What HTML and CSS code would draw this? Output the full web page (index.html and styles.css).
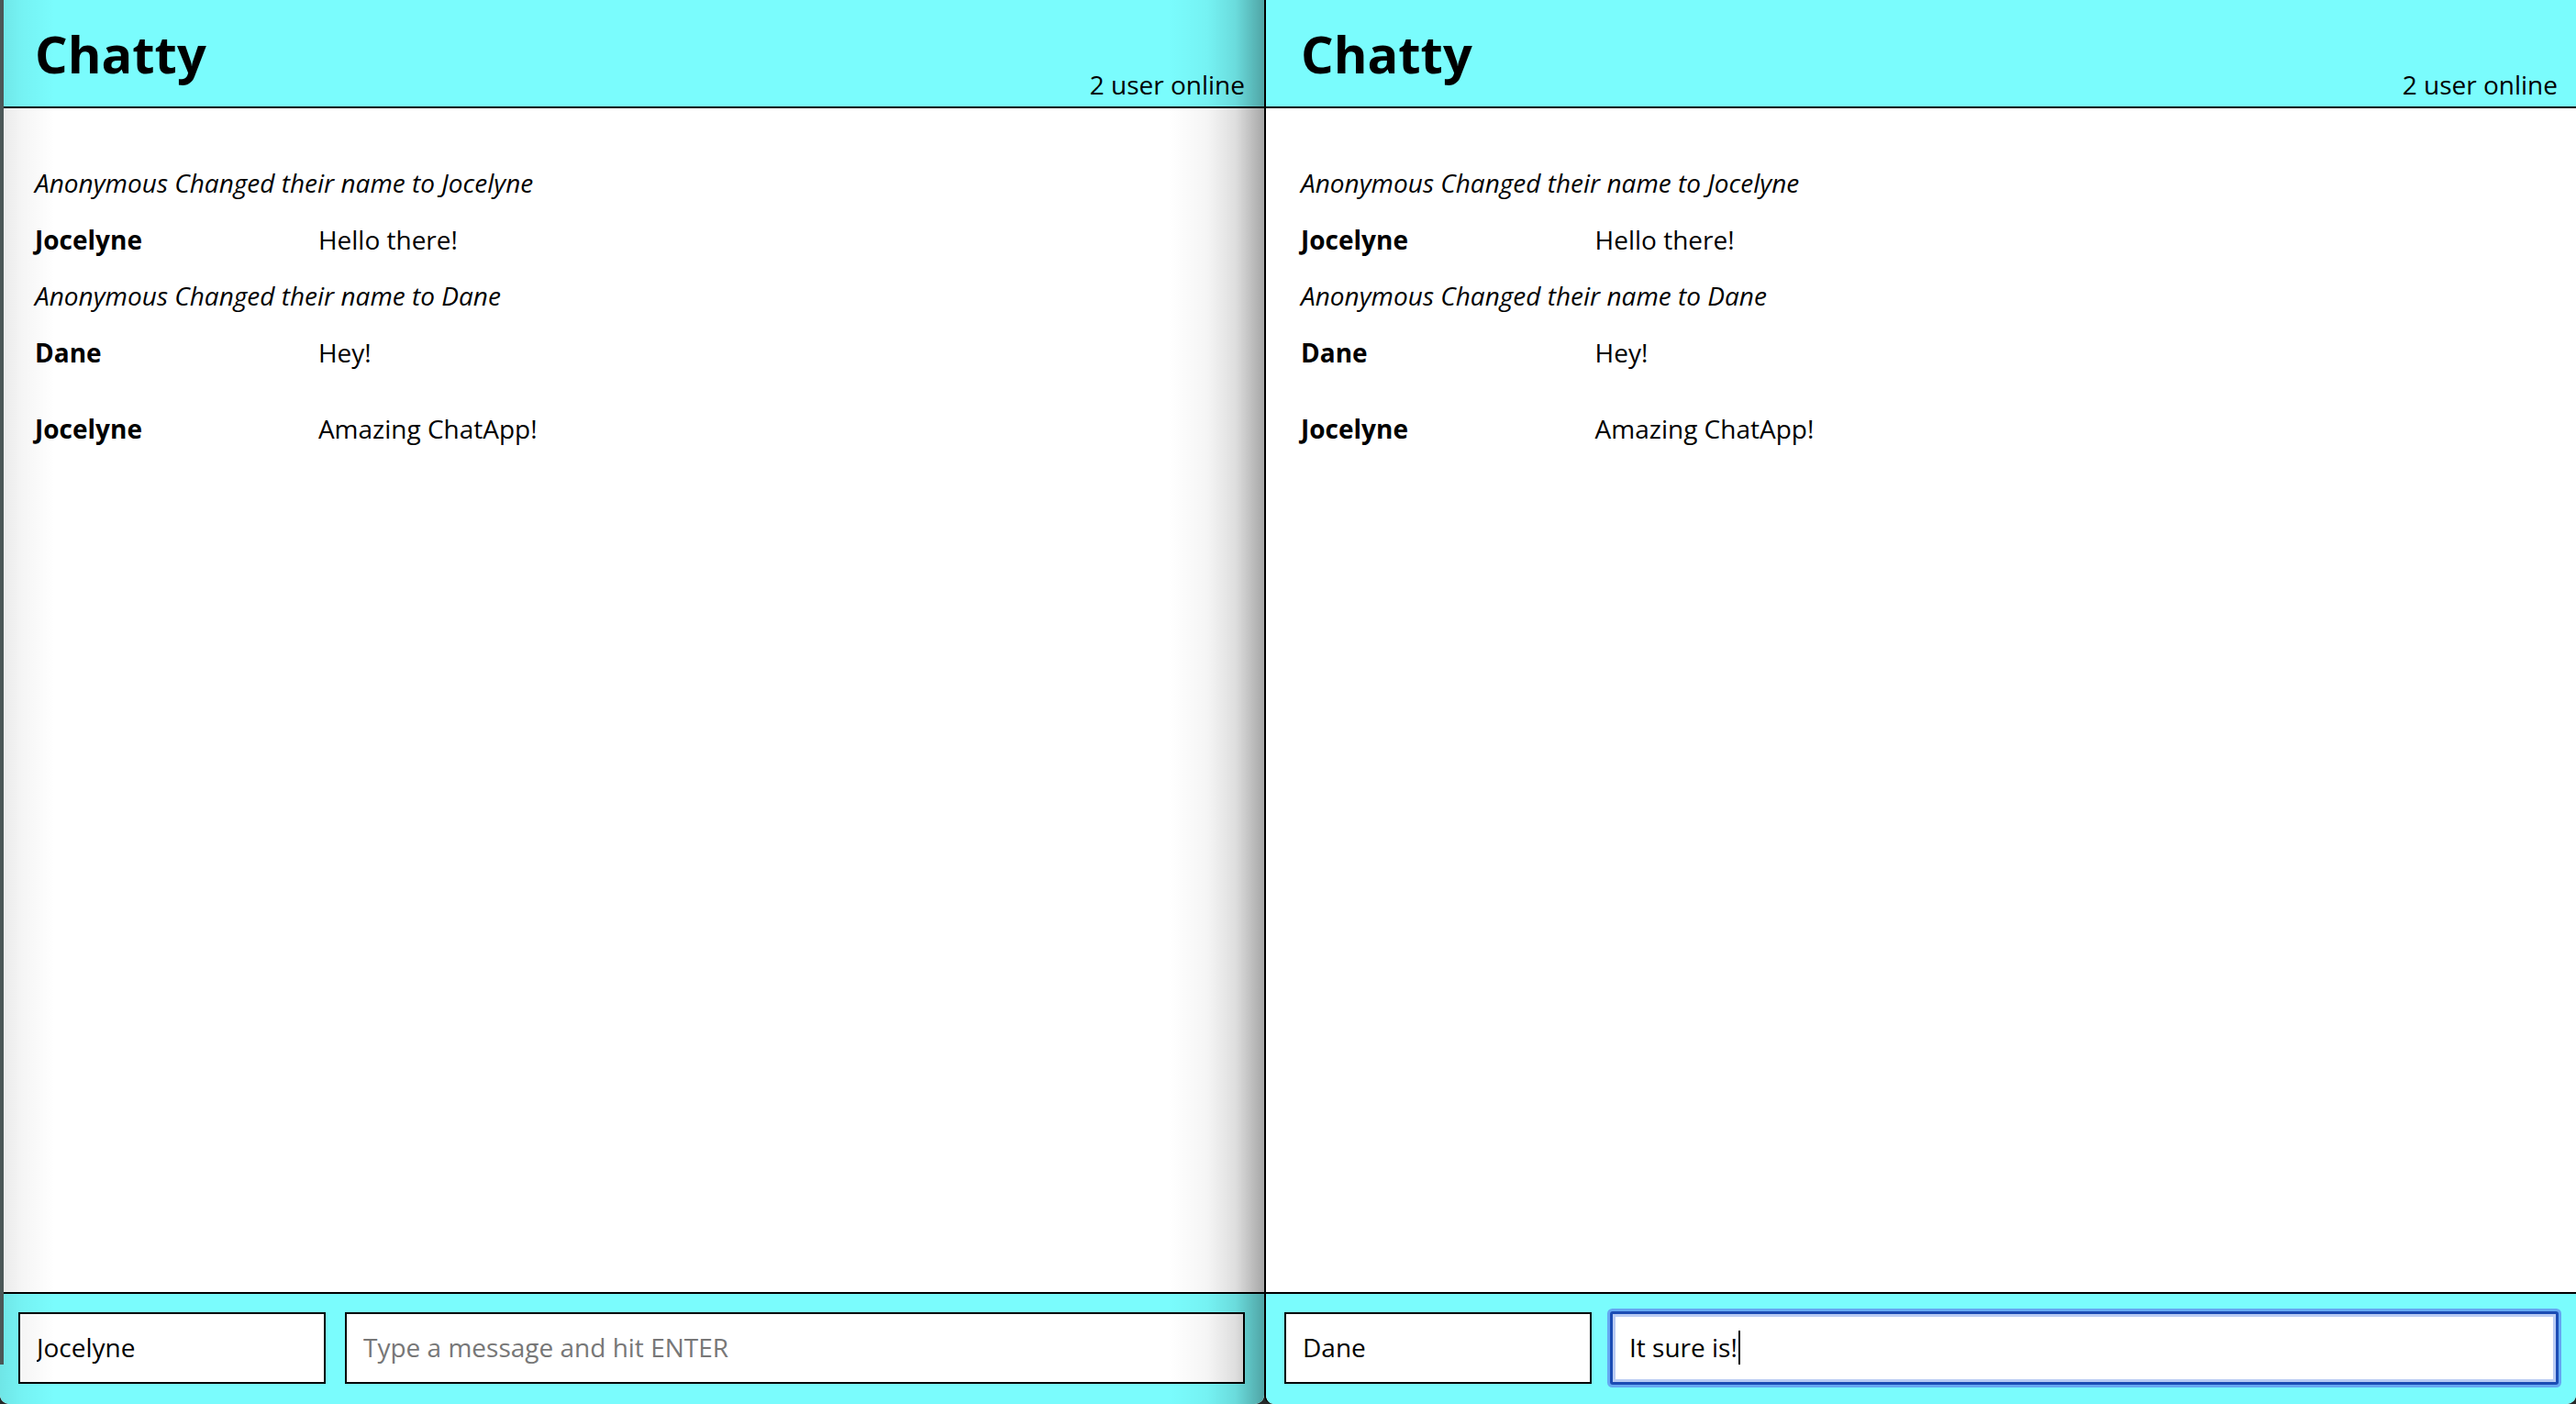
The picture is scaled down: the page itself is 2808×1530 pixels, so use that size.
FILE: index.html
```html
<!DOCTYPE html>
<html lang="en">
<head>
<meta charset="utf-8">
<title>Chatty</title>
<link rel="stylesheet" href="styles.css">
</head>
<body>
  <div class="desk">
    <section class="window window--back">
      <header class="navbar">
        <h1 class="navbar__brand">Chatty</h1>
        <span class="navbar__count">2 user online</span>
      </header>
      <main class="messages">
        <div class="notification">Anonymous Changed their name to Jocelyne</div>
        <div class="message"><span class="message__user">Jocelyne</span><span class="message__content">Hello there!</span></div>
        <div class="notification">Anonymous Changed their name to Dane</div>
        <div class="message"><span class="message__user">Dane</span><span class="message__content">Hey!</span></div>
        <div class="message message--later"><span class="message__user">Jocelyne</span><span class="message__content">Amazing ChatApp!</span></div>
      </main>
      <footer class="chatbar">
        <input class="field field--name" type="text" value="Jocelyne">
        <input class="field field--message" type="text" placeholder="Type a message and hit ENTER">
      </footer>
    </section>
    <section class="window window--front">
      <header class="navbar">
        <h1 class="navbar__brand">Chatty</h1>
        <span class="navbar__count">2 user online</span>
      </header>
      <main class="messages">
        <div class="notification">Anonymous Changed their name to Jocelyne</div>
        <div class="message"><span class="message__user">Jocelyne</span><span class="message__content">Hello there!</span></div>
        <div class="notification">Anonymous Changed their name to Dane</div>
        <div class="message"><span class="message__user">Dane</span><span class="message__content">Hey!</span></div>
        <div class="message message--later"><span class="message__user">Jocelyne</span><span class="message__content">Amazing ChatApp!</span></div>
      </main>
      <footer class="chatbar">
        <input class="field field--name" type="text" value="Dane">
        <div class="field field--message field--focus" role="textbox">It sure is!<span class="caret"></span></div>
      </footer>
    </section>
  </div>
</body>
</html>
```
FILE: styles.css
```css
html, body {
  margin: 0;
  padding: 0;
}

body {
  background: #262a2a;
  font-family: "Open Sans", "Noto Sans", sans-serif;
  font-size: 28px;
  color: #000;
  overflow: hidden;
}

.desk {
  display: flex;
  height: 1530px;
}

.window {
  position: relative;
  display: flex;
  flex-direction: column;
  height: 100%;
  background: #fff;
  border-radius: 0 0 10px 10px;
  overflow: hidden;
  box-sizing: border-box;
}

.window--back {
  flex: 0 0 1378px;
}

.window--back::before {
  content: "";
  position: absolute;
  left: 0;
  top: 0;
  bottom: 0;
  width: 60px;
  z-index: 3;
  pointer-events: none;
  background:
    linear-gradient(#4b5757, #4b5757) 0 0 / 4px 1487px no-repeat,
    linear-gradient(to right, rgba(0, 0, 0, 0.09), rgba(0, 0, 0, 0.04) 40%, rgba(0, 0, 0, 0)) 0 0 / 100% 100% no-repeat;
}

.window--back::after {
  content: "";
  position: absolute;
  right: 0;
  top: 0;
  bottom: 0;
  width: 104px;
  z-index: 3;
  pointer-events: none;
  background: linear-gradient(to right, rgba(0, 0, 0, 0) 0%, rgba(0, 0, 0, 0.04) 40%, rgba(0, 0, 0, 0.13) 70%, rgba(0, 0, 0, 0.35) 100%);
}

.window--front {
  flex: 1 1 auto;
  border-left: 2px solid #000;
}

.navbar {
  flex: none;
  display: flex;
  justify-content: space-between;
  height: 118px;
  box-sizing: border-box;
  padding: 0 20px 5px 38px;
  background: #7afcfd;
  border-bottom: 2px solid #000;
}

.window--back .navbar {
  padding-right: 21px;
}

.navbar__brand {
  margin: 20px 0 0;
  align-self: flex-start;
  font-size: 56px;
  line-height: 76px;
  font-weight: 700;
}

.navbar__count {
  align-self: flex-end;
  font-size: 28px;
  line-height: 38px;
}

.messages {
  flex: 1 1 auto;
  padding: 62px 20px 0 38px;
}

.notification,
.message {
  line-height: 38px;
  margin-bottom: 23.7px;
}

.notification {
  font-style: italic;
}

.message {
  display: flex;
}

.message--later {
  margin-top: 45px;
}

.message__user {
  flex: 0 0 23.4%;
  font-weight: 700;
}

.message__content {
  flex: 1 1 auto;
}

.chatbar {
  flex: none;
  display: flex;
  gap: 21px;
  padding: 20px 20px 22px 20px;
  background: #7afcfd;
  border-top: 2px solid #000;
}

.window--back .chatbar {
  padding-right: 21px;
}

.field {
  height: 78px;
  box-sizing: border-box;
  margin: 0;
  border: 2px solid #000;
  border-radius: 0;
  padding: 0 18px 2px;
  background: #fff;
  font-family: "Open Sans", "Noto Sans", sans-serif;
  font-size: 28px;
  line-height: 38px;
  color: #000;
  outline: none;
}

.field::placeholder {
  color: #777;
}

.field--name {
  flex: 0 0 335px;
  width: 335px;
}

.field--message {
  flex: 1 1 auto;
  min-width: 0;
}

.field--focus {
  display: flex;
  align-items: center;
  border-color: #1c4cb4;
  box-shadow: 0 0 0 1px #1c4cb4, 0 0 0 4px #66a8f2, inset 0 0 0 3px #b9cbf3;
  border-radius: 2px;
}

.caret {
  display: inline-block;
  width: 2px;
  height: 37px;
  margin-left: 1px;
  background: #000;
}
```
